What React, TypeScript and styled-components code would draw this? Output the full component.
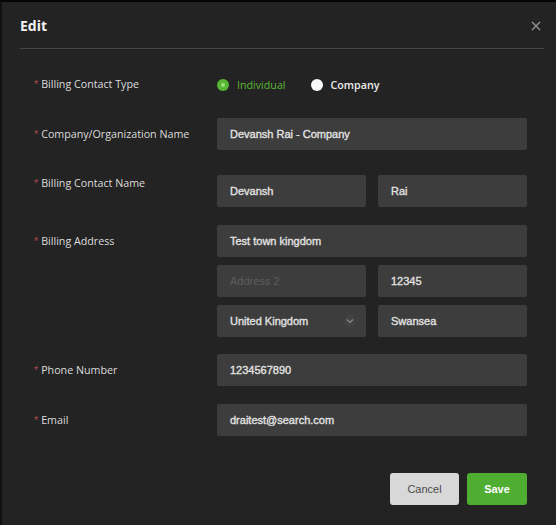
import React from "react";
import styled, { createGlobalStyle } from "styled-components";

const Global = createGlobalStyle`
  html, body { margin: 0; padding: 0; background: #0a0a0a; }
  body { font-family: "Open Sans", "Liberation Sans", sans-serif; }
  * { box-sizing: border-box; }
`;

const Modal = styled.div`
  width: 556px;
  height: 525px;
  background: #232323;
  border-top: 2px solid #050505;
  border-left: 2px solid #111;
  display: flex;
  flex-direction: column;
`;

const Header = styled.div`
  margin: 0 12px 0 18px;
  height: 47px;
  border-bottom: 1px solid #464646;
  display: flex;
  align-items: center;
  justify-content: space-between;
`;

const Title = styled.div`
  color: #f2f2f2;
  font-family: "Open Sans", sans-serif;
  font-weight: 700;
  font-size: 14px;
  padding-top: 1px;
`;

const Close = styled.div`
  width: 16px;
  height: 16px;
  display: flex;
  align-items: center;
  justify-content: center;
  margin-top: 1px;
`;

const Body = styled.div`
  padding: 0 29px 0 32px;
  display: flex;
  flex-direction: column;
`;

const Row = styled.div<{ $mt: number; $center?: boolean }>`
  display: grid;
  grid-template-columns: 183px 310px;
  margin-top: ${(p) => p.$mt}px;
  align-items: ${(p) => (p.$center ? "center" : "start")};
`;

const Label = styled.div<{ $top: number }>`
  padding-top: ${(p) => p.$top}px;
  color: #dcdcdc;
  font-size: 10.7px;
  line-height: 16px;
  font-family: "Open Sans", sans-serif;
  &::before {
    content: "*";
    color: #a8474d;
    margin-right: 3px;
    font-family: "Liberation Sans", sans-serif;
  }
`;

const Fields = styled.div`
  display: flex;
  flex-direction: column;
  gap: 8px;
`;

const Pair = styled.div`
  display: grid;
  grid-template-columns: 149px 149px;
  gap: 12px;
`;

const Input = styled.div<{ $placeholder?: boolean; $select?: boolean }>`
  height: 32px;
  background: #3d3d3d;
  border-radius: 2px;
  padding: 0 ${(p) => (p.$select ? 9 : 13)}px 0 13px;
  display: flex;
  align-items: center;
  justify-content: space-between;
  font-family: "Liberation Sans", Arial, sans-serif;
  font-size: 11px;
  font-weight: 400;
  -webkit-text-stroke: ${(p) => (p.$placeholder ? "0" : "0.35px")};
  color: ${(p) => (p.$placeholder ? "#5e5e5e" : "#e2e2e2")};
`;

const Radios = styled.div`
  display: flex;
  align-items: center;
  gap: 25px;
  padding-top: 1px;
`;

const RadioItem = styled.label<{ $checked?: boolean }>`
  display: flex;
  align-items: center;
  gap: 8px;
  font-size: 10.7px;
  font-family: "Open Sans", sans-serif;
  font-weight: ${(p) => (p.$checked ? 500 : 600)};
  color: ${(p) => (p.$checked ? "#5cb833" : "#ececec")};
`;

const Dot = styled.span<{ $checked?: boolean }>`
  width: 12px;
  height: 12px;
  border-radius: 50%;
  background: ${(p) => (p.$checked ? "#58b536" : "#fafafa")};
  display: flex;
  align-items: center;
  justify-content: center;
  &::after {
    content: "";
    width: 4px;
    height: 4px;
    border-radius: 50%;
    background: ${(p) => (p.$checked ? "#9be07a" : "transparent")};
  }
`;

const Footer = styled.div`
  display: flex;
  justify-content: flex-end;
  gap: 8px;
  padding: 0 29px 0 0;
  margin-top: 37px;
`;

const Button = styled.button<{ $primary?: boolean }>`
  height: 32px;
  width: ${(p) => (p.$primary ? 60 : 69)}px;
  border: none;
  border-radius: 3px;
  background: ${(p) => (p.$primary ? "#4fae32" : "#d8d8d8")};
  color: ${(p) => (p.$primary ? "#ffffff" : "#4a4a4a")};
  font-family: "Liberation Sans", Arial, sans-serif;
  font-size: 11px;
  font-weight: ${(p) => (p.$primary ? 700 : 400)};
  cursor: pointer;
`;

const Chevron = () => (
  <svg width="14" height="14" viewBox="0 0 14 14" fill="none">
    <circle cx="7" cy="7" r="6" fill="#434343" />
    <path d="M4 5.5 L7 8.5 L10 5.5" stroke="#8a8a8a" strokeWidth="1.1" />
  </svg>
);

export default function App() {
  return (
    <>
      <Global />
      <Modal>
        <Header>
          <Title>Edit</Title>
          <Close>
            <svg width="10" height="10" viewBox="0 0 10 10">
              <path d="M1 1 L9 9 M9 1 L1 9" stroke="#9a9a9a" strokeWidth="1.2" />
            </svg>
          </Close>
        </Header>
        <Body>
          <Row $mt={27} $center>
            <Label $top={0}>Billing Contact Type</Label>
            <Radios>
              <RadioItem $checked>
                <Dot $checked />
                Individual
              </RadioItem>
              <RadioItem>
                <Dot />
                Company
              </RadioItem>
            </Radios>
          </Row>
          <Row $mt={26}>
            <Label $top={8}>Company/Organization Name</Label>
            <Input>Devansh Rai - Company</Input>
          </Row>
          <Row $mt={25}>
            <Label $top={0}>Billing Contact Name</Label>
            <Pair>
              <Input>Devansh</Input>
              <Input>Rai</Input>
            </Pair>
          </Row>
          <Row $mt={18}>
            <Label $top={8}>Billing Address</Label>
            <Fields>
              <Input>Test town kingdom</Input>
              <Pair>
                <Input $placeholder>Address 2</Input>
                <Input>12345</Input>
              </Pair>
              <Pair>
                <Input $select>
                  United Kingdom
                  <Chevron />
                </Input>
                <Input>Swansea</Input>
              </Pair>
            </Fields>
          </Row>
          <Row $mt={17}>
            <Label $top={8}>Phone Number</Label>
            <Input>1234567890</Input>
          </Row>
          <Row $mt={18}>
            <Label $top={8}>Email</Label>
            <Input>draitest@search.com</Input>
          </Row>
        </Body>
        <Footer>
          <Button>Cancel</Button>
          <Button $primary>Save</Button>
        </Footer>
      </Modal>
    </>
  );
}
